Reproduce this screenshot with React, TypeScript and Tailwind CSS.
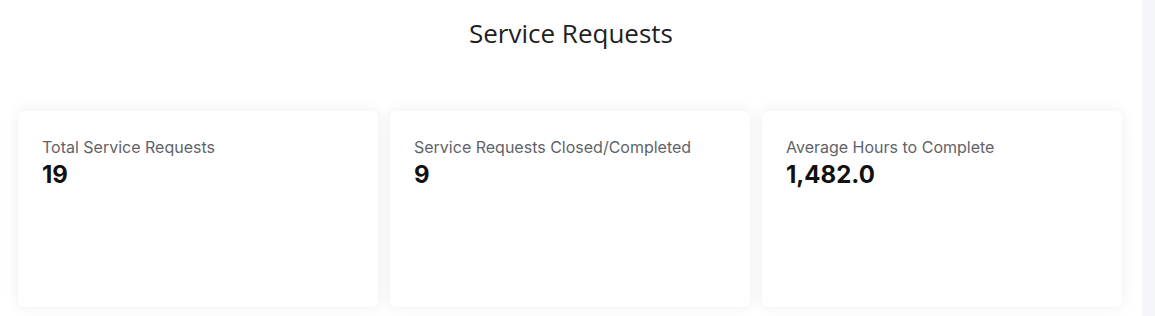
import React from "react";

const cards = [
  { label: "Total Service Requests", value: "19" },
  { label: "Service Requests Closed/Completed", value: "9" },
  { label: "Average Hours to Complete", value: "1,482.0" },
];

export default function App() {
  return (
    <div className="flex h-[316px] w-[1155px] overflow-hidden bg-white">
      <div className="flex-1 flex flex-col">
        <h1
          className="pt-[16px] text-center text-[26px] leading-[34px] text-[#1f1f1f]"
          style={{ fontFamily: '"Open Sans", sans-serif' }}
        >
          Service Requests
        </h1>
        <div className="mt-[61px] grid grid-cols-3 gap-3 pl-[18px] pr-[20px]">
          {cards.map((c) => (
            <div
              key={c.label}
              className="h-[196px] rounded-md bg-white px-6 pt-[25px] shadow-[0_0_16px_rgba(0,0,0,0.07)]"
              style={{ fontFamily: "Inter, sans-serif" }}
            >
              <div className="text-[16px] leading-[22px] text-[#5f6368]">{c.label}</div>
              <div className="mt-[3px] text-[24px] font-bold leading-[28px] text-[#111]">{c.value}</div>
            </div>
          ))}
        </div>
      </div>
      <div className="w-[13px] bg-[#f5f6fa]" />
    </div>
  );
}
